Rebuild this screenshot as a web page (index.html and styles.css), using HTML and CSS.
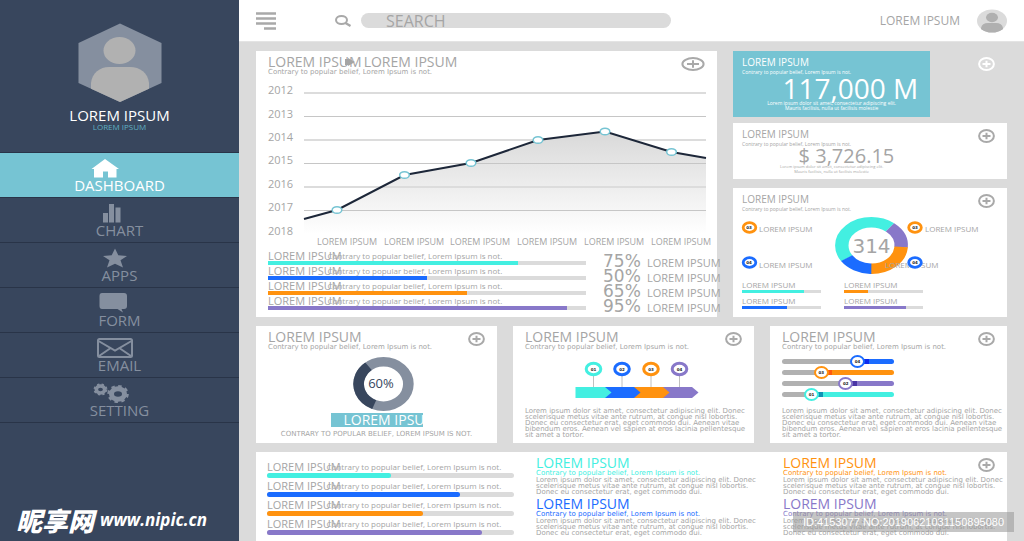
FILE: index.html
```html
<!DOCTYPE html>
<html lang="en">
<head>
<meta charset="utf-8">
<title>Dashboard</title>
<link rel="stylesheet" href="styles.css">
</head>
<body>
<svg class="defs" aria-hidden="true">
  <symbol id="plus" viewBox="0 0 17 14"><ellipse cx="8.500" cy="7" rx="7.400" ry="5.900"/><path d="M4.500 7h8M8.500 3.800v6.400"/></symbol>
  <symbol id="plus-wide" viewBox="0 0 24 14"><ellipse cx="12" cy="7" rx="10.600" ry="5.900"/><path d="M6 7h12M12 3.300v7.400"/></symbol>
</svg>
<div class="app">
  <aside class="sidebar">
    <div class="profile">
      <svg class="hexagon" viewBox="0 0 84 80" aria-hidden="true">
        <clipPath id="hex"><path d="M42 0.500 83.500 20V60L42 79 .5 60V20z"/></clipPath>
        <g clip-path="url(#hex)">
          <rect width="84" height="80" fill="#858f9f"/>
          <ellipse cx="41.500" cy="27.500" rx="16" ry="13.500" fill="#b1b1b1"/>
          <path d="M13 80V60C14 50 22 44 31 44H52C62 44 70 50 71 60V80z" fill="#b1b1b1"/>
        </g>
      </svg>
      <strong class="profile-name">LOREM IPSUM</strong>
      <span class="profile-role">LOREM IPSUM</span>
    </div>
    <nav class="menu">
      <a class="menu-item active" href="#dashboard">
        <svg viewBox="0 0 60 22" aria-hidden="true"><path d="M15 2 29 12H26.500V20.500H18V14.500H13V20.500H4V12H1.500z"/></svg>DASHBOARD</a>
      <a class="menu-item" href="#chart">
        <svg viewBox="0 0 60 22" aria-hidden="true"><path d="M13 11h5v9.500h-5zM19 2h5v18.500h-5zM25.500 5.500h5v15h-5z"/></svg>CHART</a>
      <a class="menu-item" href="#apps">
        <svg viewBox="0 0 60 22" aria-hidden="true"><path d="M25 1.500 28.300 8.300 37 9 30.500 13.200 33 20.500 25 16.700 17 20.500 19.500 13.200 13 9 21.700 8.300z"/></svg>APPS</a>
      <a class="menu-item" href="#form">
        <svg viewBox="0 0 60 22" aria-hidden="true"><path d="M12 1H34Q37 1 37 4V14Q37 17 34 17H31.500L33 20.500 27.500 17H12Q9.500 17 9.500 14V4Q9.500 1 12 1z"/></svg>FORM</a>
      <a class="menu-item" href="#email">
        <svg class="line" viewBox="0 0 60 22" aria-hidden="true"><rect x="8" y="2" width="34" height="18" rx="1.500"/><path d="M8.500 4 25 13.500 41.500 4M9 19 20 11.500M41 19 30 11.500"/></svg>EMAIL</a>
      <a class="menu-item" href="#setting">
        <svg class="gears" viewBox="0 0 60 22" aria-hidden="true">
          <ellipse cx="10.500" cy="7.500" rx="4.200" ry="3.500" stroke-width="3.600"/><ellipse cx="10.500" cy="7.500" rx="6" ry="5" stroke-width="2" stroke-dasharray="2.200 2.200"/>
          <ellipse cx="28" cy="12" rx="6.500" ry="5.300" stroke-width="5"/><ellipse cx="28" cy="12" rx="9.500" ry="7.800" stroke-width="2.600" stroke-dasharray="3.400 3.400"/>
        </svg>SETTING</a>
    </nav>
    <div class="brand"><span class="brand-name" lang="zh">昵享网</span><span class="brand-url">www.nipic.cn</span></div>
  </aside>

  <div class="page">
    <header class="topbar">
      <button class="icon-button" aria-label="Menu">
        <svg width="20" height="18" viewBox="0 0 20 18" stroke="#a9a9a9" stroke-width="2.600"><path d="M0 1.500H20M0 6.500H20M0 11.500H20M8 16.500H20"/></svg>
      </button>
      <form class="search">
        <label for="search" aria-label="Search"><svg width="17" height="12" viewBox="0 0 17 12" fill="none" stroke="#a9a9a9"><ellipse cx="6.500" cy="5" rx="5.500" ry="4" stroke-width="2"/><path d="M10.500 8 15.500 11" stroke-width="2.300"/></svg></label>
        <input id="search" type="search" placeholder="SEARCH">
      </form>
      <div class="user">
        <span>LOREM IPSUM</span>
        <svg width="30" height="24" viewBox="0 0 30 24" aria-hidden="true">
          <clipPath id="round"><ellipse cx="15" cy="12" rx="15" ry="11.500"/></clipPath>
          <g clip-path="url(#round)"><rect width="30" height="24" fill="#dbdbdb"/><ellipse cx="15" cy="8.500" rx="6" ry="4.700" fill="#b0b0b0"/><path d="M4 24V19Q5 14 11 14H19Q25 14 26 19V24z" fill="#b0b0b0"/></g>
        </svg>
      </div>
    </header>

    <main class="board">
      <div class="row top">
        <section class="card trend">
          <h2 class="pair"><span>LOREM IPSUM</span><span>LOREM IPSUM</span><svg class="pair-arrow" width="12" height="8" viewBox="0 0 12 8" aria-hidden="true"><path d="M0 1H3V0L10 4 3 8V7H0z" fill="#a5a5a5"/></svg></h2>
          <p class="sub">Contrary to popular belief, Lorem Ipsum is not.</p>
          <button class="add wide" aria-label="Add"><svg><use href="#plus-wide"/></svg></button>
          <svg class="plot" viewBox="0 0 461 166">
            <defs><linearGradient id="fade" x1="0" y1="0" x2="0" y2="1"><stop offset="0" stop-color="#d9d9d9"/><stop offset="1" stop-color="#fff"/></linearGradient></defs>
            <path d="M48 135 81 126 148.500 91 215 79 282 56 349 47.500 415.500 68 450 74V150H48z" fill="url(#fade)"/>
            <path d="M48 9H450M48 56H450M48 103H450" stroke="#dcdcdc" stroke-width="2"/>
            <path d="M48 32.500H450M48 79.500H450M48 126.500H450" stroke="#c6c6c6"/>
            <path d="M48 135 81 126 148.500 91 215 79 282 56 349 47.500 415.500 68 450 74" fill="none" stroke="#1d2739" stroke-width="2"/>
            <g fill="#fff" stroke="#76c4d3" stroke-width="1.500">
              <ellipse cx="81" cy="126" rx="4.800" ry="3.300"/><ellipse cx="148.500" cy="91" rx="4.800" ry="3.300"/><ellipse cx="215" cy="79" rx="4.800" ry="3.300"/><ellipse cx="282" cy="56" rx="4.800" ry="3.300"/><ellipse cx="349" cy="47.500" rx="4.800" ry="3.300"/><ellipse cx="415.500" cy="68" rx="4.800" ry="3.300"/>
            </g>
            <g class="years"><text x="12" y="10">2012</text><text x="12" y="34">2013</text><text x="12" y="57">2014</text><text x="12" y="80">2015</text><text x="12" y="104">2016</text><text x="12" y="127">2017</text><text x="12" y="151">2018</text></g>
            <g class="ticks"><text x="61" y="161">LOREM IPSUM</text><text x="128" y="161">LOREM IPSUM</text><text x="194" y="161">LOREM IPSUM</text><text x="261" y="161">LOREM IPSUM</text><text x="328" y="161">LOREM IPSUM</text><text x="395" y="161">LOREM IPSUM</text></g>
          </svg>
          <div class="trend-foot">
            <div class="bars">
              <div class="bar-row"><p><b>LOREM IPSUM</b><span>Contrary to popular belief, Lorem Ipsum is not.</span></p><div class="bar cyan"><i style="width:78.5%"></i></div></div>
              <div class="bar-row"><p><b>LOREM IPSUM</b><span>Contrary to popular belief, Lorem Ipsum is not.</span></p><div class="bar blue"><i style="width:50%"></i></div></div>
              <div class="bar-row"><p><b>LOREM IPSUM</b><span>Contrary to popular belief, Lorem Ipsum is not.</span></p><div class="bar orange"><i style="width:62.500%"></i></div></div>
              <div class="bar-row"><p><b>LOREM IPSUM</b><span>Contrary to popular belief, Lorem Ipsum is not.</span></p><div class="bar purple"><i style="width:94%"></i></div></div>
            </div>
            <ul class="shares">
              <li><b>75%</b>LOREM IPSUM</li><li><b>50%</b>LOREM IPSUM</li><li><b>65%</b>LOREM IPSUM</li><li><b>95%</b>LOREM IPSUM</li>
            </ul>
          </div>
        </section>

        <div class="side">
          <section class="stat">
            <div class="stat-body teal">
              <h3>LOREM IPSUM</h3>
              <p class="sub">Contrary to popular belief, Lorem Ipsum is not.</p>
              <p class="amount">117,000 M</p>
              <p class="note">Lorem ipsum dolor sit amet, consectetur adipiscing elit.<br>Mauris facilisis, nulla ut facilisis molestie</p>
            </div>
            <button class="add light" aria-label="Add"><svg><use href="#plus"/></svg></button>
          </section>
          <section class="stat white">
            <div class="stat-body">
              <h3>LOREM IPSUM</h3>
              <p class="sub">Contrary to popular belief, Lorem Ipsum is not.</p>
              <p class="amount small">$ 3,726.15</p>
              <p class="note small">Lorem ipsum dolor sit amet, consectetur adipiscing elit.<br>Mauris facilisis, nulla ut facilisis molestie</p>
            </div>
            <button class="add" aria-label="Add"><svg><use href="#plus"/></svg></button>
          </section>
          <section class="stat white split">
            <h3>LOREM IPSUM</h3>
            <p class="sub">Contrary to popular belief, Lorem Ipsum is not.</p>
            <button class="add" aria-label="Add"><svg><use href="#plus"/></svg></button>
            <svg class="ring" viewBox="0 0 274 64">
              <g fill="none" stroke-width="10.500" transform="translate(138.500 32.500) scale(1.280 1)">
                <circle r="23.200" pathLength="360" stroke="#43efe1" stroke-dasharray="163 197" stroke-dashoffset="-147"/>
                <circle r="23.200" pathLength="360" stroke="#8878c9" stroke-dasharray="55 305" transform="rotate(310)"/>
                <circle r="23.200" pathLength="360" stroke="#ff920f" stroke-dasharray="87 273" transform="rotate(5)"/>
                <circle r="23.200" pathLength="360" stroke="#1b6cff" stroke-dasharray="55 305" transform="rotate(92)"/>
              </g>
              <text class="ring-total" x="138.500" y="40">314</text>
              <g class="ring-label"><text x="26" y="19">LOREM IPSUM</text><text x="26" y="55">LOREM IPSUM</text><text x="192" y="19">LOREM IPSUM</text><text x="152" y="55">LOREM IPSUM</text></g>
              <g fill="#fff" stroke-width="2.800">
                <ellipse cx="16.500" cy="14.500" rx="6.300" ry="4.900" stroke="#ff920f"/><ellipse cx="182" cy="14.500" rx="6.300" ry="4.900" stroke="#ff920f"/>
                <ellipse cx="16.500" cy="49.500" rx="6.300" ry="4.900" stroke="#1b6cff"/><ellipse cx="182" cy="49.500" rx="6.300" ry="4.900" stroke="#1b6cff"/>
              </g>
              <g class="pin-text"><text x="16" y="16">03</text><text x="182" y="16">03</text><text x="16" y="51">04</text><text x="182" y="51">04</text></g>
            </svg>
            <div class="minis">
              <div><p>LOREM IPSUM</p><div class="bar cyan"><i style="width:78%"></i></div></div>
              <div><p>LOREM IPSUM</p><div class="bar orange"><i style="width:31%"></i></div></div>
              <div><p>LOREM IPSUM</p><div class="bar blue"><i style="width:57%"></i></div></div>
              <div><p>LOREM IPSUM</p><div class="bar purple"><i style="width:79%"></i></div></div>
            </div>
          </section>
        </div>
      </div>

      <div class="row middle">
        <section class="card gauge">
          <h2>LOREM IPSUM</h2>
          <p class="sub">Contrary to popular belief, Lorem Ipsum is not.</p>
          <button class="add" aria-label="Add"><svg><use href="#plus"/></svg></button>
          <svg class="dial" width="80" height="60" viewBox="0 0 80 60">
            <g fill="none" stroke-width="9.500" transform="translate(46.500 33) scale(1.120 1)"><circle r="22.200" stroke="#858f9f"/><circle r="22.200" pathLength="360" stroke="#38465d" stroke-dasharray="121 239" transform="rotate(112)"/></g>
            <text x="44" y="37">60%</text>
          </svg>
          <p class="tag">LOREM IPSUM</p>
          <p class="caption">CONTRARY TO POPULAR BELIEF, LOREM IPSUM IS NOT.</p>
        </section>

        <section class="card">
          <h2>LOREM IPSUM</h2>
          <p class="sub">Contrary to popular belief, Lorem Ipsum is not.</p>
          <button class="add" aria-label="Add"><svg><use href="#plus"/></svg></button>
          <svg class="steps" width="180" height="57" viewBox="0 0 180 57">
            <path d="M68.500 24V36M97 24V36M126 24V36M154.500 24V36" stroke="#c0c0c0"/>
            <path d="M136 36H167L173.500 41.500 167 47H136z" fill="#8878c9"/>
            <path d="M106 36H138L144.500 41.500 138 47H106z" fill="#ff920f"/>
            <path d="M78 36H109L115.500 41.500 109 47H78z" fill="#1b6cff"/>
            <path d="M50.500 36H80L86.500 41.500 80 47H50.500z" fill="#43efe1"/>
            <g fill="#fff" stroke-width="3"><ellipse cx="68.500" cy="18" rx="7.300" ry="5.700" stroke="#43efe1"/><ellipse cx="97" cy="18" rx="7.300" ry="5.700" stroke="#1b6cff"/><ellipse cx="126" cy="18" rx="7.300" ry="5.700" stroke="#ff920f"/><ellipse cx="154.500" cy="18" rx="7.300" ry="5.700" stroke="#8878c9"/></g>
            <g class="pin-text"><text x="68.500" y="20">01</text><text x="97" y="20">02</text><text x="126" y="20">03</text><text x="154.500" y="20">04</text></g>
          </svg>
          <p class="body">Lorem ipsum dolor sit amet, consectetur adipiscing elit. Donec<br>scelerisque metus vitae ante rutrum, at congue nisl lobortis.<br>Donec eu consectetur erat, eget commodo dui. Aenean vitae<br>bibendum eros. Aenean vel sapien at eros lacinia pellentesque<br>sit amet a tortor.</p>
        </section>

        <section class="card">
          <h2>LOREM IPSUM</h2>
          <p class="sub">Contrary to popular belief, Lorem Ipsum is not.</p>
          <button class="add" aria-label="Add"><svg><use href="#plus"/></svg></button>
          <div class="sliders">
            <div class="slider blue" style="--v:.7"><input type="range" value="70" aria-label="04"><span>04</span></div>
            <div class="slider orange" style="--v:.33"><input type="range" value="33" aria-label="03"><span>03</span></div>
            <div class="slider purple" style="--v:.58"><input type="range" value="58" aria-label="02"><span>02</span></div>
            <div class="slider cyan" style="--v:.23"><input type="range" value="23" aria-label="01"><span>01</span></div>
          </div>
          <p class="body">Lorem ipsum dolor sit amet, consectetur adipiscing elit. Donec<br>scelerisque metus vitae ante rutrum, at congue nisl lobortis.<br>Donec eu consectetur erat, eget commodo dui. Aenean vitae<br>bibendum eros. Aenean vel sapien at eros lacinia pellentesque<br>sit amet a tortor.</p>
        </section>
      </div>

      <section class="card summary">
        <button class="add" aria-label="Add"><svg><use href="#plus"/></svg></button>
        <div class="bars rounded">
          <div class="bar-row"><p><b>LOREM IPSUM</b><span>Contrary to popular belief, Lorem Ipsum is not.</span></p><div class="bar cyan"><i style="width:50%"></i></div></div>
          <div class="bar-row"><p><b>LOREM IPSUM</b><span>Contrary to popular belief, Lorem Ipsum is not.</span></p><div class="bar blue"><i style="width:78%"></i></div></div>
          <div class="bar-row"><p><b>LOREM IPSUM</b><span>Contrary to popular belief, Lorem Ipsum is not.</span></p><div class="bar orange"><i style="width:63%"></i></div></div>
          <div class="bar-row"><p><b>LOREM IPSUM</b><span>Contrary to popular belief, Lorem Ipsum is not.</span></p><div class="bar purple"><i style="width:87%"></i></div></div>
        </div>
        <div class="articles">
          <article class="cyan"><h2>LOREM IPSUM</h2><p class="sub">Contrary to popular belief, Lorem Ipsum is not.</p><p class="body">Lorem ipsum dolor sit amet, consectetur adipiscing elit. Donec<br>scelerisque metus vitae ante rutrum, at congue nisl lobortis.<br>Donec eu consectetur erat, eget commodo dui.</p></article>
          <article class="blue"><h2>LOREM IPSUM</h2><p class="sub">Contrary to popular belief, Lorem Ipsum is not.</p><p class="body">Lorem ipsum dolor sit amet, consectetur adipiscing elit. Donec<br>scelerisque metus vitae ante rutrum, at congue nisl lobortis.<br>Donec eu consectetur erat, eget commodo dui.</p></article>
        </div>
        <div class="articles">
          <article class="orange"><h2>LOREM IPSUM</h2><p class="sub">Contrary to popular belief, Lorem Ipsum is not.</p><p class="body">Lorem ipsum dolor sit amet, consectetur adipiscing elit. Donec<br>scelerisque metus vitae ante rutrum, at congue nisl lobortis.<br>Donec eu consectetur erat, eget commodo dui.</p></article>
          <article class="purple"><h2>LOREM IPSUM</h2><p class="sub">Contrary to popular belief, Lorem Ipsum is not.</p><p class="body">Lorem ipsum dolor sit amet, consectetur adipiscing elit. Donec<br>scelerisque metus vitae ante rutrum, at congue nisl lobortis.<br>Donec eu consectetur erat, eget commodo dui.</p></article>
        </div>
      </section>
    </main>
  </div>
  <p class="stamp">ID:4153077 NO:20190621031150895080</p>
</div>
</body>
</html>
```
FILE: styles.css
```css
* { box-sizing: border-box; margin: 0; padding: 0; }
body { font-family: "Open Sans", "Noto Sans", sans-serif; font-size: 14px; color: #a5a5a5; background: #dbdbdb; }
button { border: 0; background: none; cursor: pointer; }
h2, h3, b, strong { font-weight: 400; }
svg { display: block; }
.defs { position: absolute; width: 0; height: 0; }

.cyan { --tone: #43efe1; --deep: #0f93b5; }
.blue { --tone: #1b6cff; --deep: #0b2cf0; }
.orange { --tone: #ff920f; --deep: #ff5a0f; }
.purple { --tone: #8878c9; --deep: #4a35a5; }

.app { position: relative; display: grid; grid-template-columns: 239px 1fr; min-height: 100vh; }

/* Sidebar */
.sidebar { display: flex; flex-direction: column; background: #38465d; }
.profile { display: flex; flex-direction: column; align-items: center; padding: 23px 0 21px; }
.hexagon { width: 84px; height: 80px; }
.profile-name { margin-top: 5px; font-size: 15px; line-height: 15px; color: #fff; }
.profile-role { font-size: 8px; line-height: 8px; color: #5fb0c2; }
.menu { border-top: 1px solid #293448; }
.menu-item { display: flex; flex-direction: column; align-items: center; padding: 4px 0 6px; border-bottom: 1px solid #293448; font-size: 15px; line-height: 12px; color: #858f9f; text-decoration: none; }
.menu-item svg { width: 60px; height: 22px; fill: currentColor; }
.menu-item svg.line { fill: none; stroke: currentColor; stroke-width: 2; }
.menu-item svg.gears { fill: none; stroke: currentColor; }
.menu-item.active { background: #76c4d3; color: #fff; }
.brand { display: flex; align-items: center; gap: 6px; margin-top: auto; padding: 0 0 4px 16px; color: #fff; font-style: italic; white-space: nowrap; }
.brand-name { font: italic 900 26px/36px "Noto Sans CJK SC", sans-serif; }
.brand-url { font-weight: 700; font-size: 17px; line-height: 36px; }

/* Top bar */
.page { display: flex; flex-direction: column; min-width: 0; }
.topbar { display: flex; align-items: center; height: 42px; padding: 0 17px; background: #fff; border-bottom: 1px solid #e4e4e4; }
.search { display: flex; align-items: center; gap: 9px; flex: 0 1 336px; margin-left: 59px; }
.search input { flex: 1; min-width: 0; height: 15px; padding: 0 25px; border: 0; border-radius: 8px; background: #dbdbdb; color: #a5a5a5; font: 16px/15px "Open Sans", sans-serif; outline: 0; appearance: none; }
.search input::placeholder { color: #a5a5a5; opacity: 1; }
.user { display: flex; align-items: center; gap: 17px; margin-left: auto; font-size: 12px; }

/* Board */
.board { display: flex; flex: 1; flex-direction: column; gap: 9px; padding: 9px 17px 0; }
.row { display: grid; gap: 16px; }
.top { grid-template-columns: 461fr 274fr; }
.middle { grid-template-columns: 241fr 241fr 237fr; }
.card { position: relative; min-width: 0; padding: 5px 12px; background: #fff; white-space: nowrap; }
h2 { font-size: 14px; line-height: 12px; }
h3 { font-size: 10px; line-height: 12px; }
.sub { font: 7px/8px "DejaVu Sans", sans-serif; }
.body { font: 7px/6px "DejaVu Sans", sans-serif; }
.add { position: absolute; top: 6px; right: 12px; width: 17px; height: 14px; color: #a9a9a9; }
.add svg { width: 100%; height: 100%; fill: none; stroke: currentColor; stroke-width: 2; }
.add.wide { width: 24px; }
.add.light { color: #fff; }

/* Trend */
.trend { padding: 5px 0 7px; }
.trend > h2, .trend > .sub { padding-left: 12px; }
.pair { position: relative; display: flex; gap: 2px; }
.pair-arrow { position: absolute; left: 89px; top: 2px; }
.plot { width: 100%; height: auto; margin-top: 8px; overflow: visible; }
.plot text { fill: #a5a5a5; }
.years { font-size: 11px; }
.ticks { font-size: 9px; }
.trend-foot { display: grid; grid-template-columns: minmax(0, 318fr) minmax(0, 114fr); gap: 17px; padding-left: 12px; }
.bar { height: 4px; background: #dbdbdb; }
.bar i { display: block; height: 100%; background: var(--tone); }
.bar-row p { display: flex; align-items: center; line-height: 11px; height: 11px; font-size: 11px; }
.bar-row p span { margin-left: -14px; font-size: 8px; }
.shares { margin: 4px 0 -4px; list-style: none; font-size: 11px; }
.shares li { display: flex; align-items: baseline; gap: 5px; height: 15px; line-height: 15px; }
.shares b { flex: none; width: 39px; font: 17px/15px "DejaVu Sans", sans-serif; }

/* Right column */
.side { display: flex; flex-direction: column; gap: 9px; min-width: 0; white-space: nowrap; }
.side .sub { font: 5px/8px "Open Sans", sans-serif; }
.stat { position: relative; }
.stat:first-child { margin-bottom: -3px; }
.white { background: #fff; }
.stat-body { width: 72%; padding: 5px 9px; }
.teal { background: #76c4d3; color: #fff; padding-bottom: 6px; }
.amount { padding-right: 3px; font-size: 28px; line-height: 24px; text-align: right; }
.amount.small { padding-right: 27px; font-size: 20px; line-height: 16px; }
.note { font-size: 5px; line-height: 5px; padding-top: 1px; text-align: center; }
.note.small { font-size: 4px; padding-top: 0; }
.split { flex: 1; padding: 5px 9px; }
.ring { display: block; width: calc(100% + 18px); height: auto; margin: 0 -9px; }
.ring text { fill: #a5a5a5; }
.ring .ring-total { font: 20px "DejaVu Sans", sans-serif; text-anchor: middle; }
.ring-label { font-size: 8px; }
.ring .pin-text text, .pin-text text { font: 700 4px "DejaVu Sans", sans-serif; fill: #222; text-anchor: middle; }
.minis { display: grid; grid-template-columns: 79px 79px; column-gap: 23px; row-gap: 2px; padding-top: 2px; }
.minis p { font-size: 8px; line-height: 11px; }
.minis .bar { height: 3px; }

/* Middle cards */
.dial { margin: 0 auto; }
.dial text { font-size: 13px; fill: #38465d; text-anchor: middle; }
.tag { width: 92px; height: 14px; margin: 2px auto 3px; padding-left: 13px; overflow: hidden; background: #76c4d3; color: #fff; font-size: 14px; line-height: 14px; }
.caption { font: 7px/8px "DejaVu Sans", sans-serif; text-align: center; }
.sliders { display: grid; width: 112px; padding: 5px 0 8px; }
.slider { position: relative; height: 11px; }
.slider input { display: block; width: 100%; height: 11px; appearance: none; background: none; outline: 0; --at: calc(7px + var(--v) * 98px); }
.slider input::-webkit-slider-runnable-track { height: 5px; border-radius: 3px; background: linear-gradient(90deg, #b1b1b1 var(--at), var(--deep) var(--at), var(--deep) calc(var(--at) + 11px), var(--tone) calc(var(--at) + 11px)); }
.slider input::-webkit-slider-thumb { appearance: none; width: 15px; height: 13px; margin-top: -4px; border: 2px solid var(--tone); border-radius: 50%; background: #fff; }
.slider span { position: absolute; left: calc(7px + var(--v) * 98px); top: 0; width: 16px; margin-left: -8px; font: 700 4px/11px "DejaVu Sans", sans-serif; color: #222; text-align: center; pointer-events: none; }

/* Summary */
.summary { display: grid; flex: 1; grid-template-columns: minmax(0, 247fr) minmax(0, 225fr) minmax(0, 212fr); gap: 22px; padding-left: 11px; }
.rounded { padding-top: 4px; }
.rounded .bar { height: 5px; margin-bottom: 2px; border-radius: 3px; }
.rounded .bar i { border-radius: 3px; }
.rounded p { height: 12px; line-height: 12px; }
.articles { display: grid; align-content: start; gap: 3px; }
.articles h2, .articles .sub { color: var(--tone); }

.stamp { position: absolute; right: 10px; bottom: 10px; width: 221px; background: rgba(150, 150, 150, .55); color: #fff; font: 11px/20px "Liberation Sans", sans-serif; text-align: center; white-space: nowrap; }
```
